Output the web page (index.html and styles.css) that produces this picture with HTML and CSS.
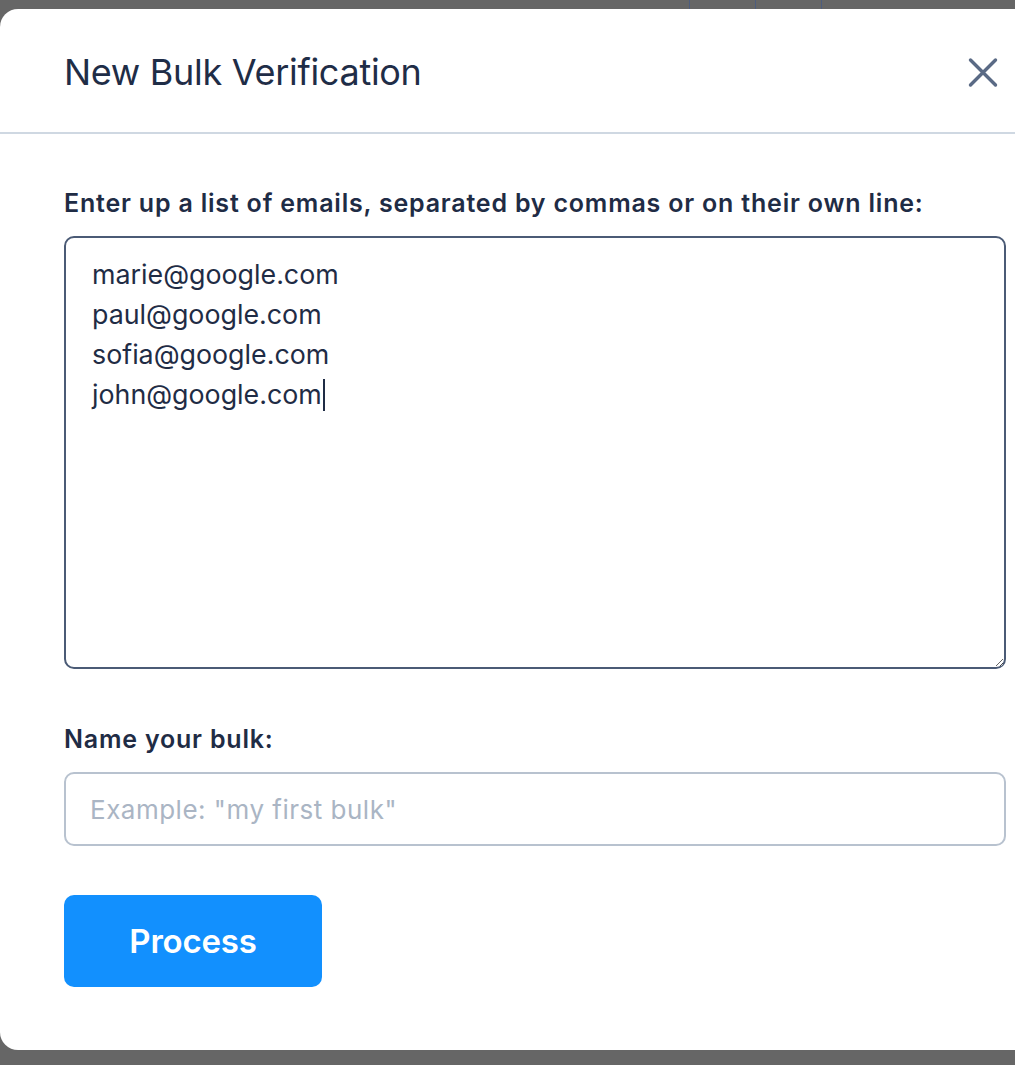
FILE: index.html
```html
<!DOCTYPE html>
<html lang="en">
<head>
<meta charset="utf-8">
<title>New Bulk Verification</title>
<link rel="stylesheet" href="styles.css">
</head>
<body>
<div class="backdrop">
  <div class="bg-strip"><span class="bg-mark"></span><span class="bg-mark"></span><span class="bg-mark"></span></div>
  <div class="modal" role="dialog" aria-labelledby="modal-title">
    <div class="modal-header">
      <h2 class="modal-title" id="modal-title">New Bulk Verification</h2>
      <button class="close-btn" type="button" aria-label="Close">
        <svg width="32" height="32" viewBox="0 0 32 32" aria-hidden="true">
          <path d="M3.5 4 L28.5 29 M28.5 4 L3.5 29" stroke="#5a6a85" stroke-width="3.4" stroke-linecap="round" fill="none"/>
        </svg>
      </button>
    </div>
    <div class="modal-body">
      <label class="field-label">Enter up a list of emails, separated by commas or on their own line:</label>
      <div class="email-box" role="textbox" aria-multiline="true"><div>marie@google.com</div><div>paul@google.com</div><div>sofia@google.com</div><div>john@google.com<span class="caret"></span></div></div>
      <label class="field-label second" for="bulk-name">Name your bulk:</label>
      <input class="name-input" id="bulk-name" type="text" placeholder="Example: &quot;my first bulk&quot;">
      <button class="process-btn" type="button">Process</button>
    </div>
  </div>
</div>
</body>
</html>
```
FILE: styles.css
```css
html, body {
  margin: 0;
  padding: 0;
}
body {
  background: #666666;
  overflow: hidden;
  font-family: Inter, "Noto Sans", "Liberation Sans", sans-serif;
  color: #1f2c45;
}
.backdrop {
  height: 1065px;
  box-sizing: border-box;
}
.bg-strip {
  height: 9px;
  display: flex;
  padding-left: 689px;
  gap: 65px;
}
.bg-mark {
  width: 1px;
  height: 9px;
  background: #4d5d7e;
}
.modal {
  width: 1070px;
  height: 1041px;
  background: #ffffff;
  border-radius: 18px;
  box-sizing: border-box;
}
.modal-header {
  height: 125px;
  box-sizing: border-box;
  border-bottom: 2px solid #cfd8e2;
  display: flex;
  align-items: center;
  justify-content: space-between;
  padding: 2px 71px 0 64px;
}
.modal-title {
  margin: 0;
  font-size: 36px;
  font-weight: 400;
  letter-spacing: -0.3px;
  color: #1f2d47;
}
.close-btn {
  border: 0;
  background: none;
  padding: 0;
  width: 32px;
  height: 32px;
  display: flex;
  cursor: pointer;
}
.modal-body {
  padding: 53px 64px 0 64px;
  display: flex;
  flex-direction: column;
  align-items: flex-start;
}
.field-label {
  display: block;
  font-size: 25px;
  line-height: 32px;
  font-weight: 600;
  color: #1f2c45;
  letter-spacing: 0.8px;
}
.field-label.second {
  margin-top: 54px;
}
.email-box {
  margin-top: 17px;
  width: 942px;
  height: 433px;
  box-sizing: border-box;
  border: 2px solid #4b5b76;
  border-radius: 10px;
  padding: 16px 26px;
  font-size: 26.8px;
  line-height: 40px;
  color: #1f2c45;
  resize: vertical;
  overflow: auto;
}
.caret {
  display: inline-block;
  width: 2px;
  height: 32px;
  background: #1f2c45;
  vertical-align: -7px;
  margin-left: 1px;
}
.name-input {
  margin-top: 17px;
  width: 942px;
  height: 74px;
  box-sizing: border-box;
  border: 2px solid #b8c2cf;
  border-radius: 10px;
  padding: 0 24px;
  font-family: Inter, "Noto Sans", "Liberation Sans", sans-serif;
  font-size: 26px;
  letter-spacing: 0.5px;
  color: #1f2c45;
  outline: none;
  background: #fff;
}
.name-input::placeholder {
  color: #aab5c4;
}
.process-btn {
  margin-top: 49px;
  width: 258px;
  height: 92px;
  border: 0;
  border-radius: 10px;
  background: #1290fe;
  color: #ffffff;
  font-family: Inter, "Noto Sans", "Liberation Sans", sans-serif;
  font-size: 33px;
  font-weight: 600;
  letter-spacing: -0.2px;
  cursor: pointer;
}
```
